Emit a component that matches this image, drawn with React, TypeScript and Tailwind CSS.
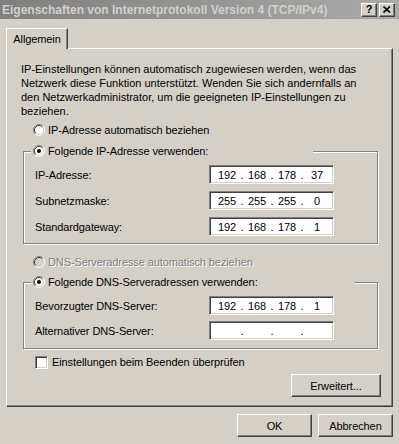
import React from "react";

function Radio({ checked = false, disabled = false }: { checked?: boolean; disabled?: boolean }) {
  return (
    <svg width="12" height="12" viewBox="0 0 12 12" className="shrink-0 block">
      <circle cx="6" cy="6" r="4.5" fill={disabled ? "#d4d0c8" : "#fff"} />
      <path d="M2.11 9.89 A5.5 5.5 0 0 1 9.89 2.11" stroke="#808080" fill="none" />
      <path d="M9.89 2.11 A5.5 5.5 0 0 1 2.11 9.89" stroke="#fff" fill="none" />
      <path d="M2.82 9.18 A4.5 4.5 0 0 1 9.18 2.82" stroke="#404040" fill="none" />
      <path d="M9.18 2.82 A4.5 4.5 0 0 1 2.82 9.18" stroke="#d4d0c8" fill="none" />
      {checked && <circle cx="6" cy="6" r="2" fill="#000" />}
    </svg>
  );
}

function IpField({ parts }: { parts: string[] }) {
  return (
    <div className="box-border w-[125px] h-[19px] bg-white border border-t-[#808080] border-l-[#808080] border-b-white border-r-white shadow-[inset_1px_1px_0_#404040,inset_-1px_-1px_0_#d4d0c8] flex items-center pl-[5px]">
      <span className="w-[24px] text-center">{parts[0]}</span>
      <span className="w-[6px] text-center">.</span>
      <span className="w-[24px] text-center">{parts[1]}</span>
      <span className="w-[6px] text-center">.</span>
      <span className="w-[24px] text-center">{parts[2]}</span>
      <span className="w-[6px] text-center">.</span>
      <span className="w-[24px] text-center">{parts[3]}</span>
    </div>
  );
}

function Row({ label, parts }: { label: string; parts: string[] }) {
  return (
    <div className="flex items-center h-[19px]">
      <span className="w-[174px]">{label}</span>
      <IpField parts={parts} />
    </div>
  );
}

function Button({ children, className = "" }: { children: React.ReactNode; className?: string }) {
  return (
    <div
      className={
        "box-border h-[23px] flex items-center justify-center bg-[#d4d0c8] border border-t-white border-l-white border-b-[#404040] border-r-[#404040] shadow-[inset_-1px_-1px_0_#808080] " +
        className
      }
    >
      {children}
    </div>
  );
}

function TitleBtn({ children }: { children: React.ReactNode }) {
  return (
    <div className="box-border w-[16px] h-[14px] flex items-center justify-center bg-[#d4d0c8] border border-t-white border-l-white border-b-[#404040] border-r-[#404040] shadow-[inset_-1px_-1px_0_#808080]">
      {children}
    </div>
  );
}

export default function App() {
  return (
    <div className="w-[399px] h-[444px] bg-[#d4d0c8] flex flex-col font-['Liberation_Sans',Arial,sans-serif] text-[11px] leading-[14px] text-black tracking-[-0.1px] overflow-hidden">
      {/* Title bar */}
      <div className="h-[19px] shrink-0 flex items-center bg-linear-to-r from-[#808080] to-[#aaaaaa] pl-[2px] pr-[4px]">
        <span className="flex-1 font-bold text-[12px] text-[#d4d0c8] whitespace-nowrap tracking-[0px]">
          Eigenschaften von Internetprotokoll Version 4 (TCP/IPv4)
        </span>
        <div className="flex gap-[2px]">
          <TitleBtn>
            <span className="font-bold text-[11px] leading-[11px] mt-[-1px]">?</span>
          </TitleBtn>
          <TitleBtn>
            <svg width="8" height="7" viewBox="0 0 8 7">
              <path d="M0.5 0.5 L7 6.5 M7 0.5 L0.5 6.5" stroke="#000" strokeWidth="1.6" />
            </svg>
          </TitleBtn>
        </div>
      </div>

      {/* Body */}
      <div className="flex flex-col pl-[6px] pt-[9px]">
        {/* Tab */}
        <div className="relative z-10 -mb-px box-border w-[62px] h-[21px] bg-[#d4d0c8] border-l border-t border-r border-l-white border-t-white border-r-[#404040] shadow-[inset_-1px_0_0_#808080] flex items-center justify-center pb-[1px]">
          Allgemein
        </div>

        {/* Panel */}
        <div className="box-border w-[387px] h-[359px] border border-t-white border-l-white border-b-[#404040] border-r-[#404040] shadow-[inset_-1px_-1px_0_#808080] flex flex-col">
          <p className="mt-[13px] ml-[14px] whitespace-nowrap tracking-[0px]">
            IP-Einstellungen können automatisch zugewiesen werden, wenn das
            <br />
            Netzwerk diese Funktion unterstützt. Wenden Sie sich andernfalls an
            <br />
            den Netzwerkadministrator, um die geeigneten IP-Einstellungen zu
            <br />
            beziehen.
          </p>

          <div className="mt-[5px] ml-[26px] h-[14px] flex items-center gap-[3px]">
            <Radio />
            <span>IP-Adresse automatisch beziehen</span>
          </div>

          {/* Group 1 */}
          <div className="relative mt-[14px] ml-[16px] w-[355px] box-border border border-[#808080] shadow-[inset_1px_1px_0_#fff,1px_1px_0_#fff] pt-[13px] pb-[7px] pl-[11px] flex flex-col gap-[7px]">
            <div className="absolute left-[7px] top-[-8px] w-[282px] h-[14px] bg-[#d4d0c8] flex items-center gap-[3px] pl-[2px]">
              <Radio checked />
              <span>Folgende IP-Adresse verwenden:</span>
            </div>
            <Row label="IP-Adresse:" parts={["192", "168", "178", "37"]} />
            <Row label="Subnetzmaske:" parts={["255", "255", "255", "0"]} />
            <Row label="Standardgateway:" parts={["192", "168", "178", "1"]} />
          </div>

          <div className="mt-[11px] ml-[26px] h-[14px] flex items-center gap-[3px]">
            <Radio disabled />
            <span className="text-[#808080] [text-shadow:1px_1px_0_#fff]">DNS-Serveradresse automatisch beziehen</span>
          </div>

          {/* Group 2 */}
          <div className="relative mt-[13px] ml-[16px] w-[355px] box-border border border-[#808080] shadow-[inset_1px_1px_0_#fff,1px_1px_0_#fff] pt-[13px] pb-[8px] pl-[11px] flex flex-col gap-[6px]">
            <div className="absolute left-[7px] top-[-8px] w-[324px] h-[14px] bg-[#d4d0c8] flex items-center gap-[3px] pl-[2px]">
              <Radio checked />
              <span>Folgende DNS-Serveradressen verwenden:</span>
            </div>
            <Row label="Bevorzugter DNS-Server:" parts={["192", "168", "178", "1"]} />
            <Row label="Alternativer DNS-Server:" parts={["", "", "", ""]} />
          </div>

          <div className="mt-[6px] ml-[28px] h-[14px] flex items-center gap-[4px]">
            <div className="box-border w-[13px] h-[13px] bg-white border border-t-[#808080] border-l-[#808080] border-b-white border-r-white shadow-[inset_1px_1px_0_#404040,inset_-1px_-1px_0_#d4d0c8]" />
            <span>Einstellungen beim Beenden überprüfen</span>
          </div>

          <div className="mt-[5px] flex justify-end pr-[11px]">
            <Button className="w-[90px]">Erweitert...</Button>
          </div>
        </div>

        {/* Bottom buttons */}
        <div className="mt-[7px] w-[387px] flex justify-end gap-[6px]">
          <Button className="w-[75px]">OK</Button>
          <Button className="w-[75px]">Abbrechen</Button>
        </div>
      </div>
    </div>
  );
}
